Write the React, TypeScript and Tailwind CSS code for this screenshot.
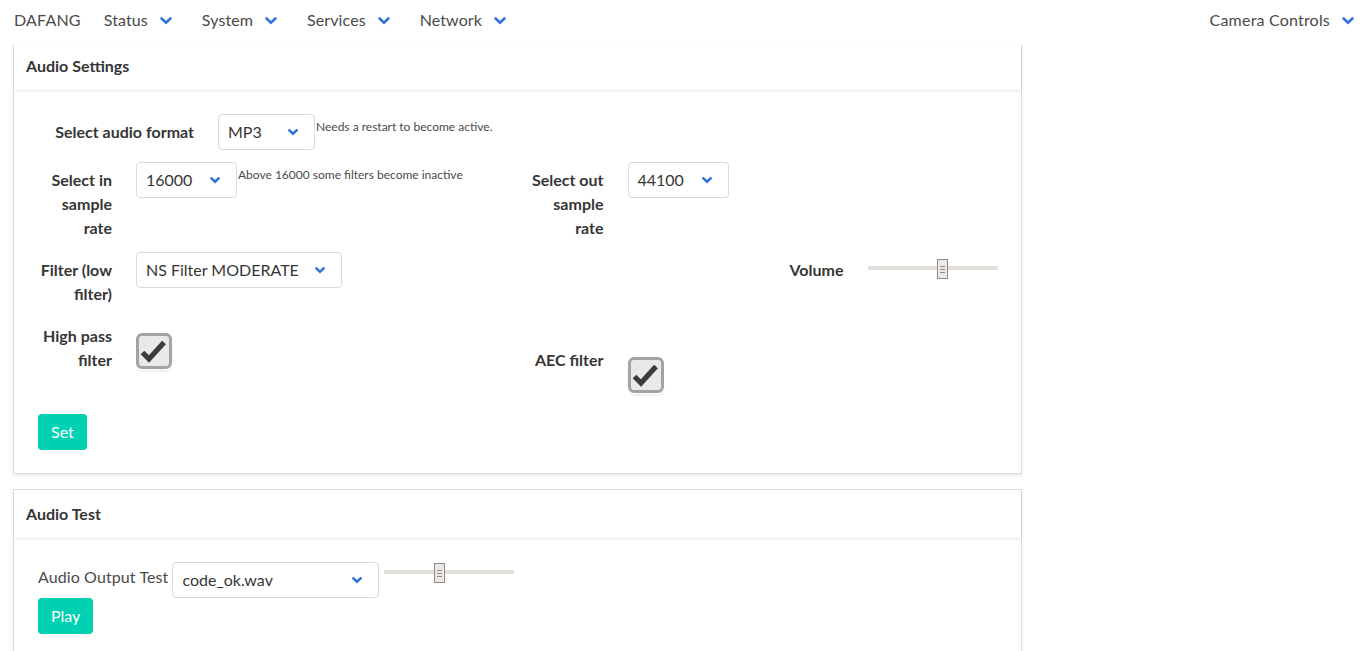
import React from "react";

const FONT = "font-['Lato','Noto_Sans',sans-serif]";

function Chevron({ big = false }: { big?: boolean }) {
  return big ? (
    <svg width="14" height="9" viewBox="0 0 14 9" className="shrink-0">
      <path d="M1.8 1.8 L7 6.8 L12.2 1.8" fill="none" stroke="#3273dc" strokeWidth="2.6" />
    </svg>
  ) : (
    <svg width="12" height="8" viewBox="0 0 12 8" className="shrink-0">
      <path d="M1.6 1.6 L6 5.8 L10.4 1.6" fill="none" stroke="#3273dc" strokeWidth="2.6" />
    </svg>
  );
}

function NavLink({ label }: { label: string }) {
  return (
    <div className="flex items-center pl-3 pr-[17px] tracking-[0.1px]">
      <span>{label}</span>
      <span className="ml-[11px] mt-[1px]">
        <Chevron big />
      </span>
    </div>
  );
}

function Select({ value, width }: { value: string; width: string }) {
  return (
    <div
      className={`flex h-9 shrink-0 items-center justify-between rounded border border-[#dbdbdb] bg-white pl-[9px] pr-[15px] text-[16px] text-[#363636] ${width}`}
    >
      <span>{value}</span>
      <Chevron />
    </div>
  );
}

function Help({ children }: { children: React.ReactNode }) {
  return <p className="mt-1 whitespace-nowrap pl-px text-[12px] leading-[18px] text-[#4a4a4a]">{children}</p>;
}

function Checkbox() {
  return (
    <div className="h-[37px] w-[37px] rounded-[6px] shadow-[0_2px_1px_rgba(0,0,0,0.06)]">
      <div className="flex h-9 w-9 items-center justify-center rounded-[6px] border-[3px] border-[#a3a3a3] bg-[#e9e9e9]">
        <svg width="30" height="30" viewBox="0 0 30 30">
          <path d="M3.5 16.5 L10 23 L25 6.5" fill="none" stroke="#3b3b3b" strokeWidth="5.2" />
        </svg>
      </div>
    </div>
  );
}

function Slider({ thumb }: { thumb: number }) {
  return (
    <div className="relative h-[20px] w-[130px] shrink-0">
      <div className="absolute left-0 right-0 top-[7px] h-[4px] bg-[#e2dfdb]" />
      <div
        className="absolute top-0 flex h-[20px] w-[11px] flex-col items-center justify-center gap-[2px] border border-[#8f8a84] bg-[#ebe8e5]"
        style={{ left: thumb }}
      >
        <div className="h-px w-[5px] bg-[#8f8a84]" />
        <div className="h-px w-[5px] bg-[#8f8a84]" />
        <div className="h-px w-[5px] bg-[#8f8a84]" />
      </div>
    </div>
  );
}

function Label({ children, width }: { children: React.ReactNode; width: string }) {
  return (
    <label className={`mr-6 shrink-0 pt-1.5 text-right text-[16px] font-bold leading-6 text-[#363636] ${width}`}>
      {children}
    </label>
  );
}

function Button({ children }: { children: React.ReactNode }) {
  return (
    <button
      type="button"
      className="h-9 rounded bg-[#00d1b2] px-[13px] text-[16px] text-white"
    >
      {children}
    </button>
  );
}

export default function App() {
  return (
    <div className={`min-h-[651px] bg-white text-[16px] text-[#4a4a4a] ${FONT}`}>
      <nav className="flex h-[45px] items-start justify-between pt-[8px] leading-6">
        <div className="flex items-center">
          <div className="pl-[14px] pr-[11px] tracking-[0.2px]">DAFANG</div>
          <NavLink label="Status" />
          <NavLink label="System" />
          <NavLink label="Services" />
          <NavLink label="Network" />
        </div>
        <div className="flex items-center pr-[7px] tracking-[0.2px]">
          <span>Camera Controls</span>
          <span className="ml-[11px] mt-[1px]">
            <Chevron big />
          </span>
        </div>
      </nav>

      <div className="pl-[13px]">
        <div className="w-[1009px] border-x border-b border-[#dcdcdc] bg-white shadow-[0_2px_3px_rgba(10,10,10,0.08)]">
          <header className="flex h-[45px] items-center pb-[3px] pl-3 font-bold text-[#363636] shadow-[0_1px_2px_rgba(10,10,10,0.1)]">
            Audio Settings
          </header>
          <div className="px-6 pb-[23px] pt-6">
            <div className="mb-3 flex">
              <Label width="w-[156px]">Select audio format</Label>
              <Select value="MP3" width="w-[97px]" />
              <Help>Needs a restart to become active.</Help>
            </div>

            <div className="grid grid-cols-2 gap-6">
              <div className="flex flex-col gap-3">
                <div className="flex">
                  <Label width="w-[74px]">Select in sample rate</Label>
                  <Select value="16000" width="w-[101px]" />
                  <Help>Above 16000 some filters become inactive</Help>
                </div>
                <div className="flex">
                  <Label width="w-[74px]">Filter (low filter)</Label>
                  <Select value="NS Filter MODERATE" width="w-[206px]" />
                </div>
                <div className="flex">
                  <Label width="w-[74px]">High pass filter</Label>
                  <div className="pt-[15px]">
                    <Checkbox />
                  </div>
                </div>
              </div>

              <div className="flex flex-col gap-3">
                <div className="flex">
                  <Label width="w-[74px]">Select out sample rate</Label>
                  <Select value="44100" width="w-[101px]" />
                </div>
                <div className="flex h-[78px]">
                  <Label width="w-[314px]">Volume</Label>
                  <div className="pt-[7px]">
                    <Slider thumb={69} />
                  </div>
                </div>
                <div className="flex h-[60px]">
                  <Label width="w-[74px]">AEC filter</Label>
                  <div className="pt-[15px]">
                    <Checkbox />
                  </div>
                </div>
              </div>
            </div>

            <div className="mt-3">
              <Button>Set</Button>
            </div>
          </div>
        </div>

        <div className="mt-[15px] w-[1009px] border border-[#dcdcdc] bg-white shadow-[0_2px_3px_rgba(10,10,10,0.08)]">
          <header className="flex h-12 items-center pl-3 font-bold text-[#363636] shadow-[0_1px_2px_rgba(10,10,10,0.1)]">
            Audio Test
          </header>
          <div className="px-6 pb-6 pt-6">
            <div className="flex items-start">
              <span className="mr-1 pt-[3px] leading-6 tracking-[0.1px]">Audio Output Test</span>
              <Select value="code_ok.wav" width="w-[207px]" />
              <div className="ml-[5px] pt-[1px]">
                <Slider thumb={50} />
              </div>
            </div>
            <Button>Play</Button>
          </div>
        </div>
      </div>
    </div>
  );
}
